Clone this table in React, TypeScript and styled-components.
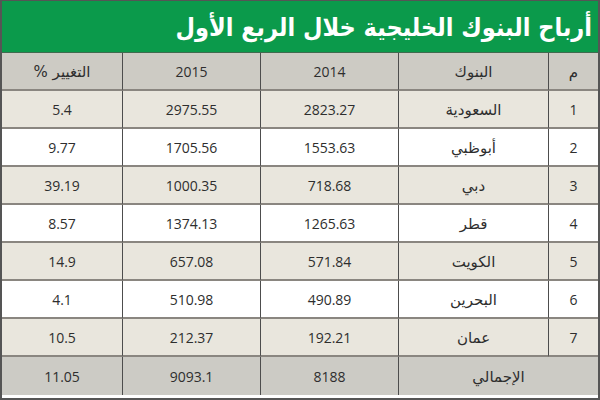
import React from "react";
import styled, { createGlobalStyle } from "styled-components";

const Global = createGlobalStyle`
  html, body { margin: 0; padding: 0; background: #ffffff; }
  body { font-family: "Open Sans", "DejaVu Sans", sans-serif; }
`;

const Frame = styled.div`
  width: 600px;
  height: 400px;
  box-sizing: border-box;
  border: 2px solid #555;
  border-top-width: 1px;
  display: flex;
  flex-direction: column;
  overflow: hidden;
`;

const TitleBar = styled.div`
  height: 52px;
  background: #0b9a4b;
  display: flex;
  align-items: center;
  justify-content: flex-start;
  padding: 2px 6px 0 0;
  box-sizing: border-box;
  border-bottom: 1px solid #3f6b4f;
`;

const Title = styled.h1`
  margin: 0;
  color: #ffffff;
  font-family: "DejaVu Sans Condensed", "DejaVu Sans", sans-serif;
  font-weight: bold;
  font-size: 25px;
`;

const Table = styled.div`
  flex: 1;
  display: grid;
  grid-template-columns: 50px 150px 138px 138px 1fr;
  grid-auto-rows: 38px;
  direction: rtl;
`;

type CellProps = { $tone: "head" | "odd" | "even" | "total"; $last?: boolean; $span?: number; $ar?: boolean };

const tones = {
  head: "#cdcbc4",
  odd: "#e9e6dd",
  even: "#ffffff",
  total: "#cccbc5",
};

const Cell = styled.div<CellProps>`
  background: ${(p) => tones[p.$tone]};
  grid-column: span ${(p) => p.$span ?? 1};
  display: flex;
  align-items: center;
  justify-content: center;
  box-sizing: border-box;
  border-left: ${(p) => (p.$last ? "none" : "1px solid #4d4d4d")};
  border-bottom: ${(p) => (p.$tone === "total" ? "none" : "2px solid #8a8680")};
  color: #2e2e2e;
  font-family: ${(p) => (p.$ar ? '"DejaVu Sans", sans-serif' : '"Open Sans", "DejaVu Sans", sans-serif')};
  font-size: ${(p) => (p.$ar ? "15px" : "14px")};
  padding-top: 1px;
`;

const rows = [
  ["1", "السعودية", "2823.27", "2975.55", "5.4"],
  ["2", "أبوظبي", "1553.63", "1705.56", "9.77"],
  ["3", "دبي", "718.68", "1000.35", "39.19"],
  ["4", "قطر", "1265.63", "1374.13", "8.57"],
  ["5", "الكويت", "571.84", "657.08", "14.9"],
  ["6", "البحرين", "490.89", "510.98", "4.1"],
  ["7", "عمان", "192.21", "212.37", "10.5"],
];

export default function App() {
  return (
    <>
      <Global />
      <Frame>
        <TitleBar dir="rtl">
          <Title>أرباح البنوك الخليجية خلال الربع الأول</Title>
        </TitleBar>
        <Table>
          <Cell $tone="head" $ar>م</Cell>
          <Cell $tone="head" $ar>البنوك</Cell>
          <Cell $tone="head">2014</Cell>
          <Cell $tone="head">2015</Cell>
          <Cell $tone="head" $ar $last>التغيير %</Cell>
          {rows.map((r, i) => {
            const tone = i % 2 === 0 ? "odd" : "even";
            return (
              <React.Fragment key={r[0]}>
                <Cell $tone={tone}>{r[0]}</Cell>
                <Cell $tone={tone} $ar>{r[1]}</Cell>
                <Cell $tone={tone}>{r[2]}</Cell>
                <Cell $tone={tone}>{r[3]}</Cell>
                <Cell $tone={tone} $last>{r[4]}</Cell>
              </React.Fragment>
            );
          })}
          <Cell $tone="total" $ar $span={2}>الإجمالي</Cell>
          <Cell $tone="total">8188</Cell>
          <Cell $tone="total">9093.1</Cell>
          <Cell $tone="total" $last>11.05</Cell>
        </Table>
      </Frame>
    </>
  );
}
